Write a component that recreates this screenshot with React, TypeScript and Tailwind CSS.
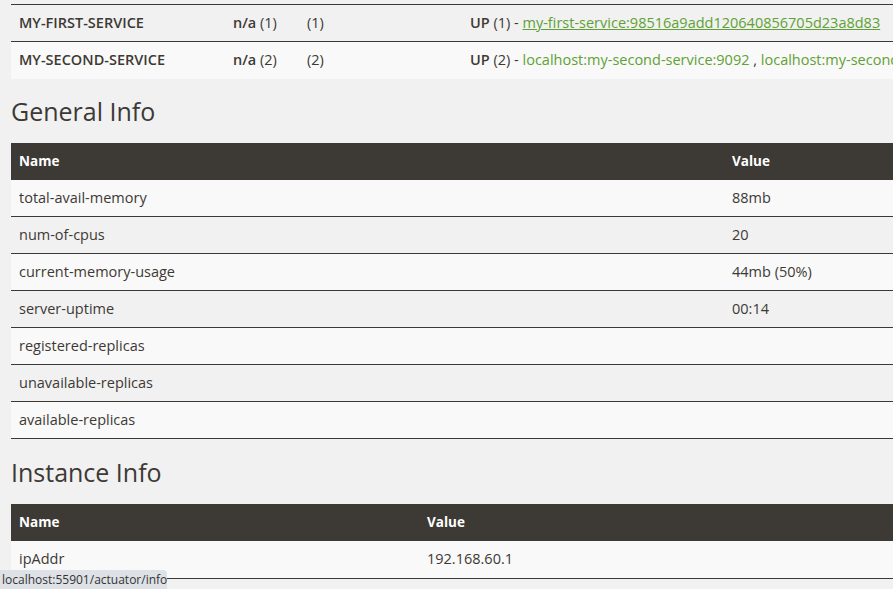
import React from "react";

const body = { fontFamily: '"Open Sans", "DejaVu Sans", sans-serif' };
const head = { fontFamily: '"Open Sans", "DejaVu Sans", sans-serif' };

function KV({ rows, nameW }: { rows: [string, string][]; nameW: string }) {
  return (
    <table className="w-[1100px] border-collapse text-[14.5px] text-[#3d3935]" style={body}>
      <thead>
        <tr className="bg-[#3d3935] text-white h-[37px]">
          <th className={`text-left font-bold text-[13.5px] px-2 ${nameW}`}>Name</th>
          <th className="text-left font-bold text-[13.5px] px-2">Value</th>
        </tr>
      </thead>
      <tbody>
        {rows.map(([k, v], i) => (
          <tr key={k} className={`h-[37px] border-b border-[#3d3935] ${i % 2 === 0 ? "bg-[#f9f9f9]" : "bg-[#f1f1f1]"}`}>
            <td className="px-2">{k}</td>
            <td className="px-2">{v}</td>
          </tr>
        ))}
      </tbody>
    </table>
  );
}

export default function App() {
  return (
    <div className="relative w-[893px] h-[589px] overflow-hidden bg-[#f1f1f1]" style={body}>
      <div className="pl-[11px] pt-[4px]">
        <table className="w-[1100px] border-collapse text-[14.5px] text-[#3d3935] border-t border-[#3d3935]">
          <tbody>
            <tr className="h-[37px] bg-[#f1f1f1] border-b border-[#3d3935]">
              <td className="px-2 w-[214px] font-semibold">MY-FIRST-SERVICE</td>
              <td className="px-2 w-[74px] whitespace-nowrap"><span className="font-semibold">n/a</span> (1)</td>
              <td className="px-2 w-[163px]">(1)</td>
              <td className="px-2 whitespace-nowrap">
                <span className="font-semibold">UP</span> (1) - <a className="text-[#5fa134] underline">my-first-service:98516a9add120640856705d23a8d83</a>
              </td>
            </tr>
            <tr className="h-[37px] bg-[#f9f9f9]">
              <td className="px-2 font-semibold">MY-SECOND-SERVICE</td>
              <td className="px-2 whitespace-nowrap"><span className="font-semibold">n/a</span> (2)</td>
              <td className="px-2">(2)</td>
              <td className="px-2 whitespace-nowrap">
                <span className="font-semibold">UP</span> (2) - <a className="text-[#5fa134]">localhost:my-second-service:9092</a> , <a className="text-[#5fa134]">localhost:my-second-service:9093</a>
              </td>
            </tr>
          </tbody>
        </table>

        <h2 className="text-[25px] font-medium text-[#3d3935] mt-[16px] mb-[16px] leading-[32px]" style={head}>General Info</h2>
        <KV
          nameW="w-[713px]"
          rows={[
            ["total-avail-memory", "88mb"],
            ["num-of-cpus", "20"],
            ["current-memory-usage", "44mb (50%)"],
            ["server-uptime", "00:14"],
            ["registered-replicas", ""],
            ["unavailable-replicas", ""],
            ["available-replicas", ""],
          ]}
        />

        <h2 className="text-[25px] font-medium text-[#3d3935] mt-[17px] mb-[16px] leading-[32px]" style={head}>Instance Info</h2>
        <KV nameW="w-[408px]" rows={[["ipAddr", "192.168.60.1"], ["status", "UP"]]} />
      </div>
      <div className="absolute left-0 bottom-0 h-[19px] w-[167px] bg-[#dee1e6] rounded-tr-[4px] text-[12px] text-[#333] pl-[2px] leading-[19px] whitespace-nowrap" style={body}>
        localhost:55901/actuator/info
      </div>
    </div>
  );
}
